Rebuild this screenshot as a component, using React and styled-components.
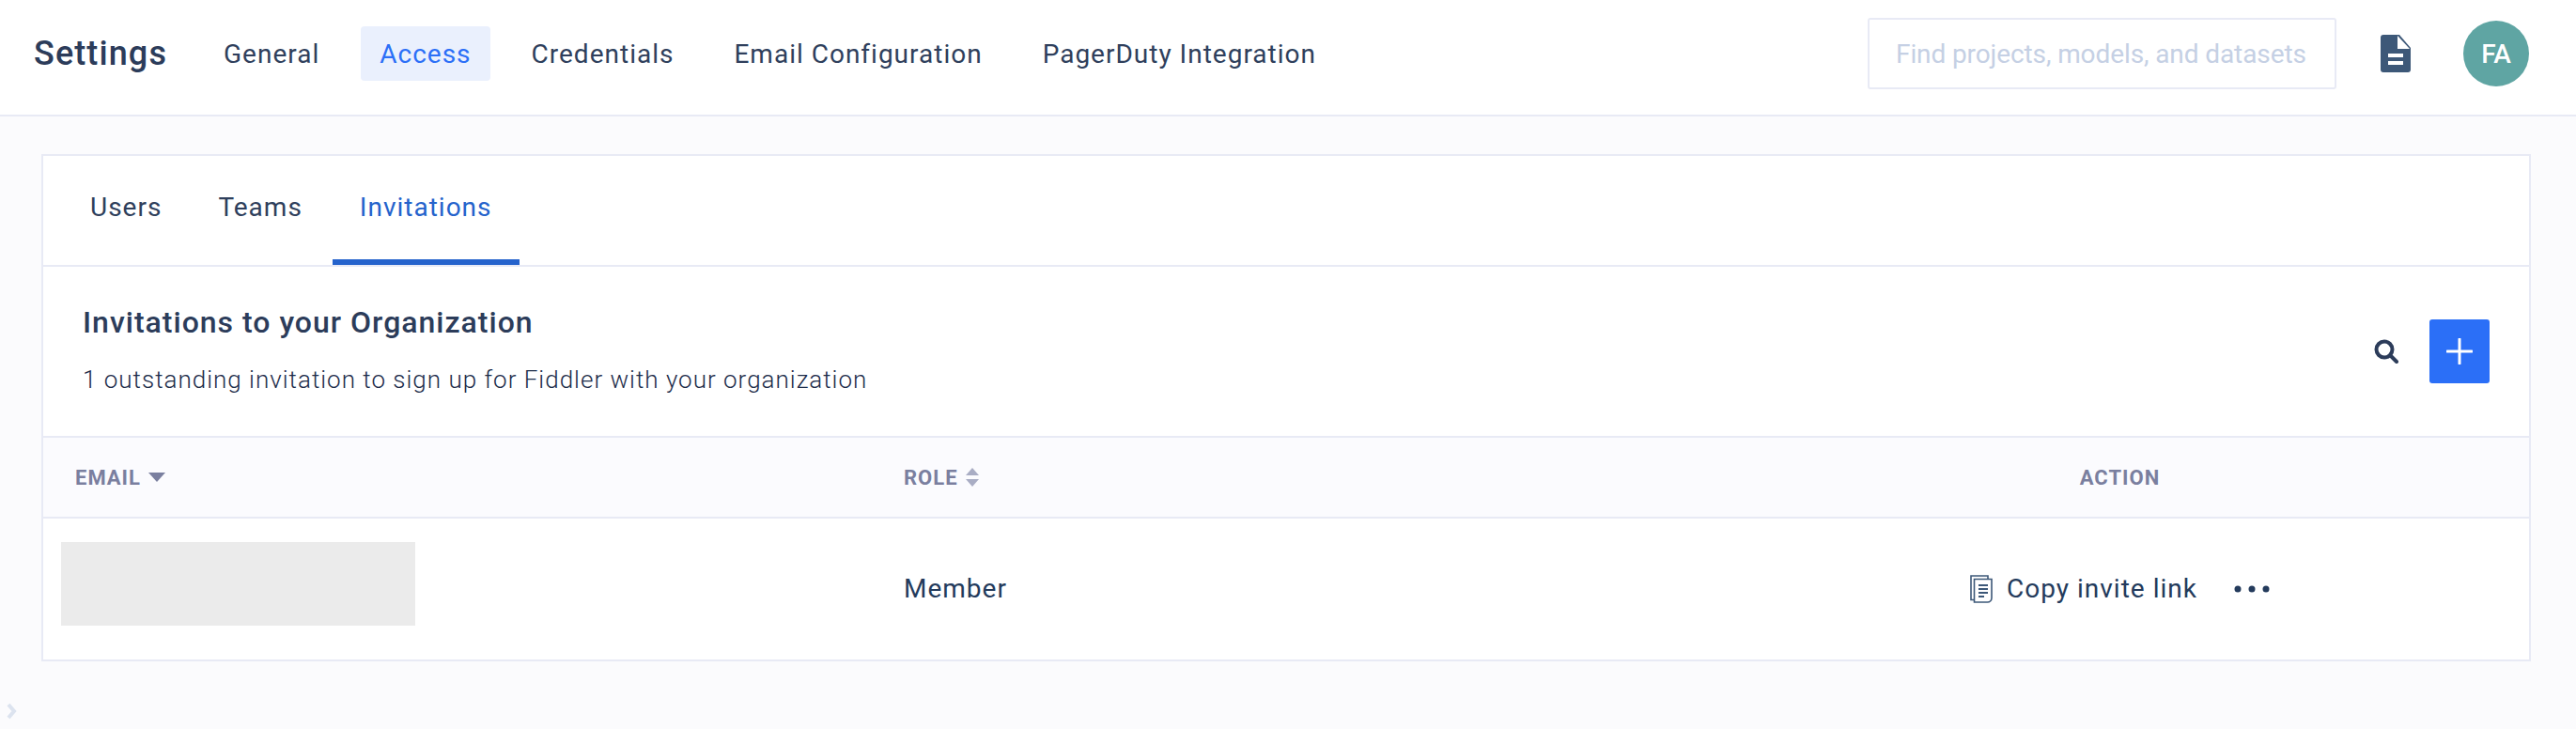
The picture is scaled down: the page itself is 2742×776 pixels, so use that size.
import React from "react";
import styled, { createGlobalStyle } from "styled-components";

const GlobalStyle = createGlobalStyle`
  html, body {
    margin: 0;
    height: 100%;
    background: #fbfbfd;
    font-family: Roboto, "Liberation Sans", sans-serif;
    color: #2c3c5a;
  }
  * { box-sizing: border-box; }
`;

const Page = styled.div`
  width: 2742px;
  height: 776px;
  overflow: hidden;
  position: relative;
`;

const Header = styled.header`
  height: 124px;
  display: flex;
  align-items: center;
  padding: 0 50px 8px 36px;
  background: #fff;
  border-bottom: 2px solid #e8eaf5;
`;

const Title = styled.h1`
  margin: 0 40px 0 0;
  font-size: 36px;
  font-weight: 500;
  letter-spacing: 1.1px;
  color: #2c3c5a;
`;

const Nav = styled.nav`
  display: flex;
  gap: 24px;
`;

const NavItem = styled.a`
  height: 58px;
  padding: 0 20px;
  display: flex;
  align-items: center;
  border-radius: 4px;
  font-size: 28px;
  letter-spacing: 1px;
  color: ${(p) => (p.$active ? "#2b6ff7" : "#2f3f5c")};
  background: ${(p) => (p.$active ? "#eaf0fd" : "transparent")};
`;

const HeaderRight = styled.div`
  margin-left: auto;
  display: flex;
  align-items: center;
`;

const SearchBox = styled.div`
  width: 499px;
  height: 76px;
  padding-left: 28px;
  display: flex;
  align-items: center;
  border: 2px solid #e8eaf5;
  border-radius: 3px;
  font-size: 28px;
  letter-spacing: -0.1px;
  color: #c5d0e4;
`;

const DocIcon = styled.svg`
  width: 32px;
  height: 40px;
  margin: 0 56px 0 47px;
`;

const Avatar = styled.div`
  width: 70px;
  height: 70px;
  border-radius: 50%;
  display: flex;
  align-items: center;
  justify-content: center;
  background: #5fa5a3;
  color: #fff;
  font-size: 28px;
  font-weight: 500;
`;

const Main = styled.main`
  padding: 40px 48px 0 44px;
`;

const Card = styled.section`
  height: 540px;
  background: #fff;
  border: 2px solid #e8eaf5;
`;

const Tabs = styled.div`
  height: 118px;
  padding-left: 21px;
  display: flex;
  gap: 3px;
  border-bottom: 2px solid #e8eaf5;
`;

const Tab = styled.a`
  height: 116px;
  padding: 0 29px 1px;
  display: flex;
  align-items: center;
  font-size: 28px;
  letter-spacing: 1px;
  color: ${(p) => (p.$active ? "#2563cc" : "#2f3f5c")};
  border-bottom: 6px solid ${(p) => (p.$active ? "#2563cc" : "transparent")};

  &:first-child {
    padding-right: 28px;
  }
`;

const SectionHead = styled.div`
  height: 182px;
  padding: 0 42px 0 42px;
  display: flex;
  align-items: center;
  justify-content: space-between;
  border-bottom: 2px solid #e8eaf5;
`;

const SectionText = styled.div`
  display: flex;
  flex-direction: column;
  gap: 25px;
  margin-top: -1px;
`;

const SectionTitle = styled.h2`
  margin: 0;
  font-size: 32px;
  line-height: 36px;
  font-weight: 500;
  letter-spacing: 1px;
  color: #2c3c5a;
`;

const SectionDesc = styled.p`
  margin: 0;
  font-size: 26px;
  line-height: 36px;
  font-weight: 300;
  letter-spacing: 1px;
  color: #1c2c4a;
`;

const SectionActions = styled.div`
  display: flex;
  align-items: center;
  gap: 33px;
`;

const AddButton = styled.button`
  width: 64px;
  height: 68px;
  padding: 0;
  border: 0;
  border-radius: 3px;
  display: flex;
  align-items: center;
  justify-content: center;
  background: #2b6ff7;
`;

const TableRow = styled.div`
  display: grid;
  grid-template-columns: 883px 892px 1fr;
`;

const TableHead = styled(TableRow)`
  height: 86px;
  align-items: center;
  background: #fbfbfe;
  border-bottom: 2px solid #e8eaf5;
`;

const HeadCell = styled.div`
  display: flex;
  align-items: center;
  gap: 8px;
  font-size: 22px;
  font-weight: 700;
  letter-spacing: 1px;
  color: #7a7f9f;
  padding-left: ${(p) => p.$pad || 0}px;
  justify-content: ${(p) => (p.$center ? "center" : "flex-start")};
`;

const BodyRow = styled(TableRow)`
  height: 150px;
  align-items: center;
`;

const Redacted = styled.div`
  width: 377px;
  height: 89px;
  margin: 0 0 11px 19px;
  background: #ebebeb;
`;

const BodyCell = styled.div`
  display: flex;
  align-items: center;
  padding-bottom: 1px;
  font-size: 28px;
  letter-spacing: 1px;
  color: #243b5c;
  padding-left: ${(p) => p.$pad || 0}px;
  justify-content: ${(p) => (p.$center ? "center" : "flex-start")};
`;

const CopyLink = styled.a`
  display: flex;
  align-items: center;
  gap: 15px;
`;

const Dots = styled.svg`
  width: 38px;
  height: 8px;
  margin-left: 39px;
`;

const Collapse = styled.svg`
  position: absolute;
  left: 7px;
  bottom: 10px;
  width: 11px;
  height: 18px;
`;

const SortDown = () => (
  <svg width="18" height="10" viewBox="0 0 18 10">
    <path d="M0 0h18L9 10z" fill="#7a7f9f" />
  </svg>
);

const SortBoth = () => (
  <svg width="14" height="20" viewBox="0 0 14 20">
    <path d="M7 0l7 8H0z" fill="#a9adc4" />
    <path d="M0 12h14l-7 8z" fill="#a9adc4" />
  </svg>
);

const SearchIcon = () => (
  <svg width="26" height="26" viewBox="0 0 26 26" fill="none" stroke="#2c3c5a" strokeLinecap="round">
    <circle cx="11" cy="11" r="8.5" strokeWidth="4" />
    <path d="M18 18l6 6" strokeWidth="4" />
  </svg>
);

const PlusIcon = () => (
  <svg width="28" height="28" viewBox="0 0 28 28" stroke="#fff" strokeWidth="3" strokeLinecap="round">
    <path d="M14 1v26M1 14h26" />
  </svg>
);

const CopyIcon = () => (
  <svg width="24" height="30" viewBox="0 0 24 30" fill="none" stroke="#3d5878" strokeWidth="1.6">
    <path d="M4 26.5H1V1h18v3" />
    <path d="M4.5 4.5h18.5v20c0 2.5-2 4.500-4.500 4.500H4.500z" fill="#fff" />
    <path d="M9 11h10M9 15h10M9 19h10M9 23h6" strokeWidth="1.8" />
  </svg>
);

const App = () => {
  return (
    <Page>
      <GlobalStyle />
      <Header>
        <Title>Settings</Title>
        <Nav>
          <NavItem>General</NavItem>
          <NavItem $active>Access</NavItem>
          <NavItem>Credentials</NavItem>
          <NavItem>Email Configuration</NavItem>
          <NavItem>PagerDuty Integration</NavItem>
        </Nav>
        <HeaderRight>
          <SearchBox>Find projects, models, and datasets</SearchBox>
          <DocIcon viewBox="0 0 32 40">
            <path
              d="M3 0h17l12 14v23a3 3 0 0 1-3 3H3a3 3 0 0 1-3-3V3a3 3 0 0 1 3-3z"
              fill="#3d5878"
            />
            <path d="M18 1v14h13z" fill="#fff" />
            <path d="M8 20h16v4H8zM8 28h16v4H8z" fill="#fff" />
          </DocIcon>
          <Avatar>FA</Avatar>
        </HeaderRight>
      </Header>
      <Main>
        <Card>
          <Tabs>
            <Tab>Users</Tab>
            <Tab>Teams</Tab>
            <Tab $active>Invitations</Tab>
          </Tabs>
          <SectionHead>
            <SectionText>
              <SectionTitle>Invitations to your Organization</SectionTitle>
              <SectionDesc>
                1 outstanding invitation to sign up for Fiddler with your organization
              </SectionDesc>
            </SectionText>
            <SectionActions>
              <SearchIcon />
              <AddButton>
                <PlusIcon />
              </AddButton>
            </SectionActions>
          </SectionHead>
          <TableHead>
            <HeadCell $pad={34}>
              EMAIL <SortDown />
            </HeadCell>
            <HeadCell $pad={33}>
              ROLE <SortBoth />
            </HeadCell>
            <HeadCell $center>ACTION</HeadCell>
          </TableHead>
          <BodyRow>
            <Redacted />
            <BodyCell $pad={33}>Member</BodyCell>
            <BodyCell $center>
              <CopyLink>
                <CopyIcon />
                Copy invite link
              </CopyLink>
              <Dots viewBox="0 0 38 8">
                <circle cx="4" cy="4" r="3.500" fill="#243b5c" />
                <circle cx="19" cy="4" r="3.500" fill="#243b5c" />
                <circle cx="34" cy="4" r="3.500" fill="#243b5c" />
              </Dots>
            </BodyCell>
          </BodyRow>
        </Card>
      </Main>
      <Collapse viewBox="0 0 11 18" fill="none" stroke="#dce3ef" strokeWidth="4">
        <path d="M2 2l6 7-6 7" />
      </Collapse>
    </Page>
  );
};

export default App;
